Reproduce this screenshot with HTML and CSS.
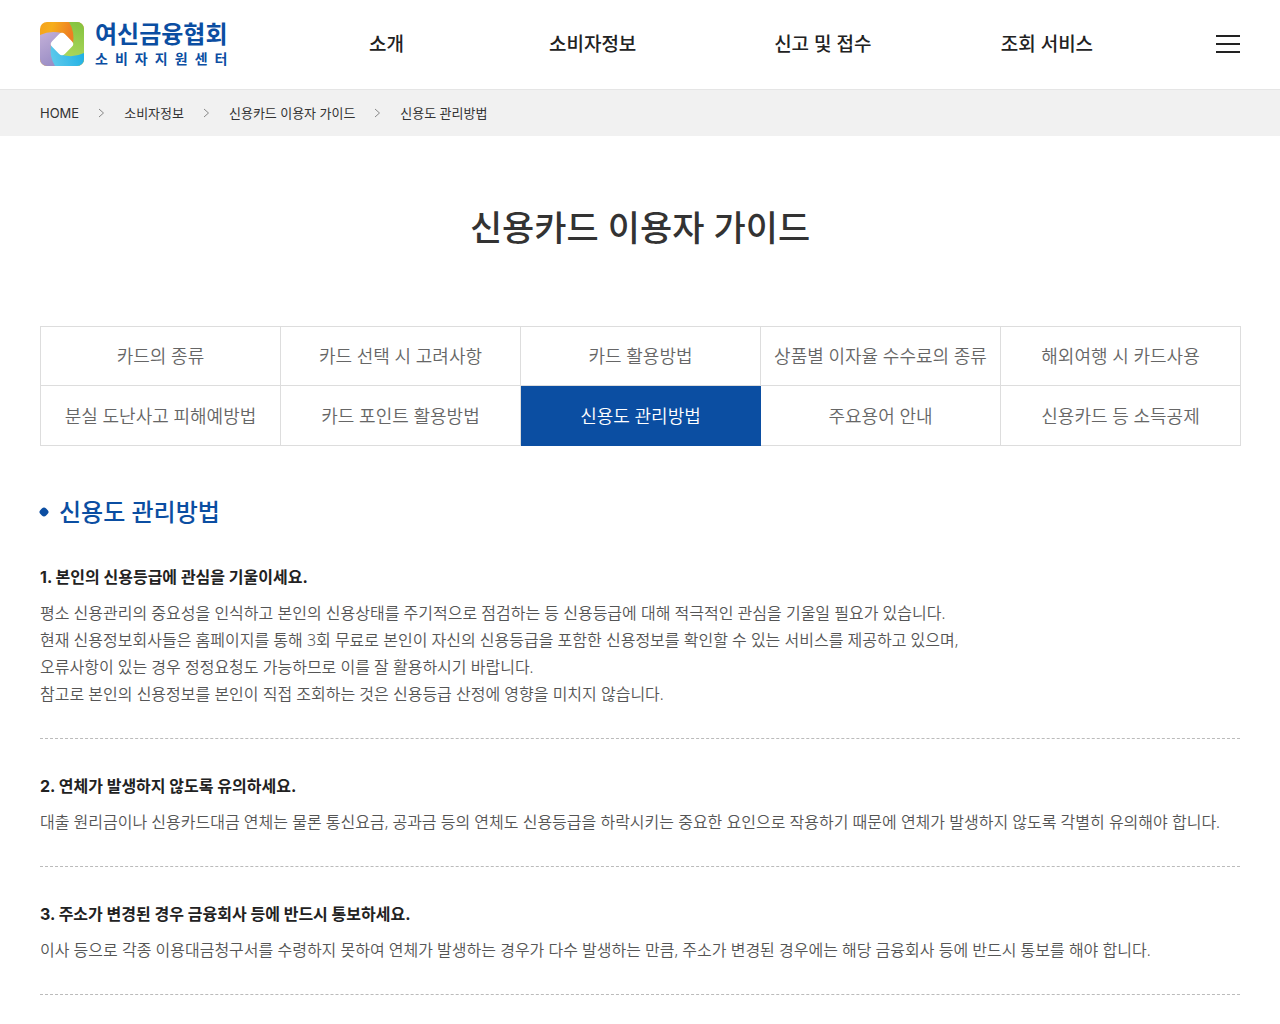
FILE: index.html
```
<!DOCTYPE html>
<html lang="ko">
<head>
    <meta charset="UTF-8">
    <meta name="viewport" content="width=device-width, initial-scale=1.0">
    <title>신용도 관리방법 | 여신금융협회 소비자지원센터</title>
    <link rel="stylesheet" href="styles.css">
</head>
<body>
    <!-- 헤더 -->
    <header class="header">
        <div class="inner header-inner">
            <a href="#" class="logo">
                <svg class="logo-mark" viewBox="0 0 44 44" aria-hidden="true">
                    <defs>
                        <clipPath id="round"><rect width="44" height="44" rx="7"/></clipPath>
                        <linearGradient id="orange" x1="0" y1="0" x2="0.7" y2="0.2">
                            <stop offset="0" stop-color="#f5a21c"/>
                            <stop offset="0.4" stop-color="#f6ae1b"/>
                            <stop offset="1" stop-color="#ee7f22"/>
                        </linearGradient>
                        <linearGradient id="green" x1="0.6" y1="0" x2="0.4" y2="1">
                            <stop offset="0" stop-color="#86c440"/>
                            <stop offset="1" stop-color="#b4da62"/>
                        </linearGradient>
                        <linearGradient id="blue" x1="0" y1="0.6" x2="1" y2="0.4">
                            <stop offset="0" stop-color="#62cbec"/>
                            <stop offset="1" stop-color="#1fb0e4"/>
                        </linearGradient>
                        <linearGradient id="purple" x1="0" y1="0" x2="0.4" y2="1">
                            <stop offset="0" stop-color="#c3b0d8"/>
                            <stop offset="1" stop-color="#9c8fc6"/>
                        </linearGradient>
                    </defs>
                    <g clip-path="url(#round)">
                        <rect width="44" height="44" fill="url(#orange)"/>
                        <path d="M29 0H44V44H20V32L33 22Q35 10 29 0Z" fill="url(#green)"/>
                        <path d="M44 31V44H8L11 22L22 33Q34 36 44 31Z" fill="url(#blue)"/>
                        <path d="M0 13Q10 8 22 11L11 22Q9 34 15 44H0Z" fill="url(#purple)"/>
                        <rect x="13" y="13" width="18" height="18" rx="4" transform="rotate(45 22 22)" fill="#fff"/>
                    </g>
                </svg>
                <span class="logo-text">
                    <strong>여신금융협회</strong>
                    <span class="logo-sub">소 비 자 지 원 센 터</span>
                </span>
            </a>
            <nav class="gnb">
                <a href="#">소개</a>
                <a href="#">소비자정보</a>
                <a href="#">신고 및 접수</a>
                <a href="#">조회 서비스</a>
            </nav>
            <button type="button" class="btn-menu" aria-label="전체메뉴">
                <span></span>
                <span></span>
                <span></span>
            </button>
        </div>
    </header>

    <!-- 현재 위치 -->
    <div class="location">
        <ol class="inner location-list">
            <li><a href="#" class="home">HOME</a></li>
            <li>
                <svg class="arrow" viewBox="0 0 7 10" aria-hidden="true"><path d="M1 1L5.5 5L1 9"/></svg>
                <a href="#">소비자정보</a>
            </li>
            <li>
                <svg class="arrow" viewBox="0 0 7 10" aria-hidden="true"><path d="M1 1L5.5 5L1 9"/></svg>
                <a href="#">신용카드 이용자 가이드</a>
            </li>
            <li>
                <svg class="arrow" viewBox="0 0 7 10" aria-hidden="true"><path d="M1 1L5.5 5L1 9"/></svg>
                <a href="#">신용도 관리방법</a>
            </li>
        </ol>
    </div>

    <!-- 본문 -->
    <main class="inner">
        <h1 class="page-title">신용카드 이용자 가이드</h1>

        <ul class="tab">
            <li><a href="#">카드의 종류</a></li>
            <li><a href="#">카드 선택 시 고려사항</a></li>
            <li><a href="#">카드 활용방법</a></li>
            <li><a href="#">상품별 이자율 수수료의 종류</a></li>
            <li><a href="#">해외여행 시 카드사용</a></li>
            <li><a href="#">분실 도난사고 피해예방법</a></li>
            <li><a href="#">카드 포인트 활용방법</a></li>
            <li class="on"><a href="#" aria-current="page">신용도 관리방법</a></li>
            <li><a href="#">주요용어 안내</a></li>
            <li><a href="#">신용카드 등 소득공제</a></li>
        </ul>

        <h2 class="sub-title">신용도 관리방법</h2>

        <section class="guide">
            <h3>1. 본인의 신용등급에 관심을 기울이세요.</h3>
            <p>
                평소 신용관리의 중요성을 인식하고 본인의 신용상태를 주기적으로 점검하는 등 신용등급에 대해 적극적인 관심을 기울일 필요가 있습니다.<br>
                현재 신용정보회사들은 홈페이지를 통해 3회 무료로 본인이 자신의 신용등급을 포함한 신용정보를 확인할 수 있는 서비스를 제공하고 있으며,<br>
                오류사항이 있는 경우 정정요청도 가능하므로 이를 잘 활용하시기 바랍니다.<br>
                참고로 본인의 신용정보를 본인이 직접 조회하는 것은 신용등급 산정에 영향을 미치지 않습니다.
            </p>
        </section>
        <section class="guide">
            <h3>2. 연체가 발생하지 않도록 유의하세요.</h3>
            <p>대출 원리금이나 신용카드대금 연체는 물론 통신요금, 공과금 등의 연체도 신용등급을 하락시키는 중요한 요인으로 작용하기 때문에 연체가 발생하지 않도록 각별히 유의해야 합니다.</p>
        </section>
        <section class="guide">
            <h3>3. 주소가 변경된 경우 금융회사 등에 반드시 통보하세요.</h3>
            <p>이사 등으로 각종 이용대금청구서를 수령하지 못하여 연체가 발생하는 경우가 다수 발생하는 만큼, 주소가 변경된 경우에는 해당 금융회사 등에 반드시 통보를 해야 합니다.</p>
        </section>
    </main>
</body>
</html>
```
FILE: styles.css
```
* {
    margin: 0;
    padding: 0;
    box-sizing: border-box;
}
body {
    font-family: "Noto Sans", "Noto Sans CJK KR", sans-serif;
    font-size: 16px;
    color: #222;
    background-color: #fff;
    word-break: keep-all;
}
ul, ol {
    list-style: none;
}
a {
    color: inherit;
    text-decoration: none;
}
.inner {
    max-width: 1280px;
    margin: 0 auto;
    padding: 0 40px;
}

/* 헤더 */
.header {
    border-bottom: 1px solid #e5e5e5;
}
.header-inner {
    display: flex;
    align-items: center;
    height: 89px;
    padding-bottom: 1px;
}
.logo {
    display: flex;
    gap: 11px;
    color: #0b4ea2;
}
.logo-mark {
    width: 44px;
    height: 44px;
}
.logo-text {
    display: flex;
    flex-direction: column;
    justify-content: space-between;
}
.logo-text strong {
    font-size: 24px;
    line-height: 24px;
    font-weight: 700;
}
.logo-sub {
    font-size: 14px;
    line-height: 14px;
    font-weight: 700;
    text-align: justify;
    text-align-last: justify;
}
.gnb {
    flex: 1;
    display: grid;
    grid-template-columns: 182fr 230fr 230fr 218fr;
    margin: 0 60px 0 68px;
    text-align: center;
    font-size: 19px;
    font-weight: 500;
    line-height: 28px;
}
.btn-menu {
    display: flex;
    flex-direction: column;
    gap: 6px;
    width: 24px;
    border: 0;
    background: none;
    cursor: pointer;
}
.btn-menu span {
    width: 100%;
    height: 2px;
    background-color: #222;
}

/* 현재 위치 */
.location {
    background-color: #f1f1f1;
}
.location-list {
    display: flex;
    align-items: center;
    gap: 19px;
    height: 46px;
    font-size: 13px;
    line-height: 20px;
    color: #333;
}
.location-list li {
    display: flex;
    align-items: center;
    gap: 19px;
}
.home {
    font-family: "Inter", sans-serif;
}
.arrow {
    width: 7px;
    height: 10px;
    fill: none;
    stroke: #888;
}

/* 본문 */
.page-title {
    padding: 65px 0 71px;
    font-size: 35px;
    line-height: 54px;
    font-weight: 500;
    text-align: center;
    color: #333;
}
.tab {
    display: grid;
    grid-template-columns: repeat(5, 1fr);
    margin-right: -1px;
    border-left: 1px solid #ddd;
}
.tab li {
    height: 60px;
    border-right: 1px solid #ddd;
    border-bottom: 1px solid #ddd;
}
.tab li:nth-child(-n+5) {
    border-top: 1px solid #ddd;
}
.tab a {
    display: flex;
    align-items: center;
    justify-content: center;
    height: 100%;
    padding-bottom: 2px;
    font-size: 18px;
    font-weight: 350;
    color: #666;
}
.tab .on {
    border-color: #0b4ea2;
    background-color: #0b4ea2;
}
.tab .on a {
    color: #fff;
}
.sub-title {
    display: flex;
    align-items: center;
    gap: 11px;
    margin-top: 48px;
    font-size: 24px;
    line-height: 36px;
    font-weight: 500;
    color: #0b4ea2;
}
.sub-title::before {
    content: '';
    width: 8px;
    height: 8px;
    border-radius: 3px;
    background-color: #0b4ea2;
    transform: rotate(45deg);
}
.guide {
    padding: 35px 0 30px;
    border-bottom: 1px dashed #bbb;
}
.guide h3 {
    margin-bottom: 11px;
    font-family: "Inter", "Noto Sans CJK KR", sans-serif;
    font-size: 16px;
    line-height: 24px;
    font-weight: 700;
}
.guide p {
    font-weight: 350;
    line-height: 27px;
    color: #555;
}
```
